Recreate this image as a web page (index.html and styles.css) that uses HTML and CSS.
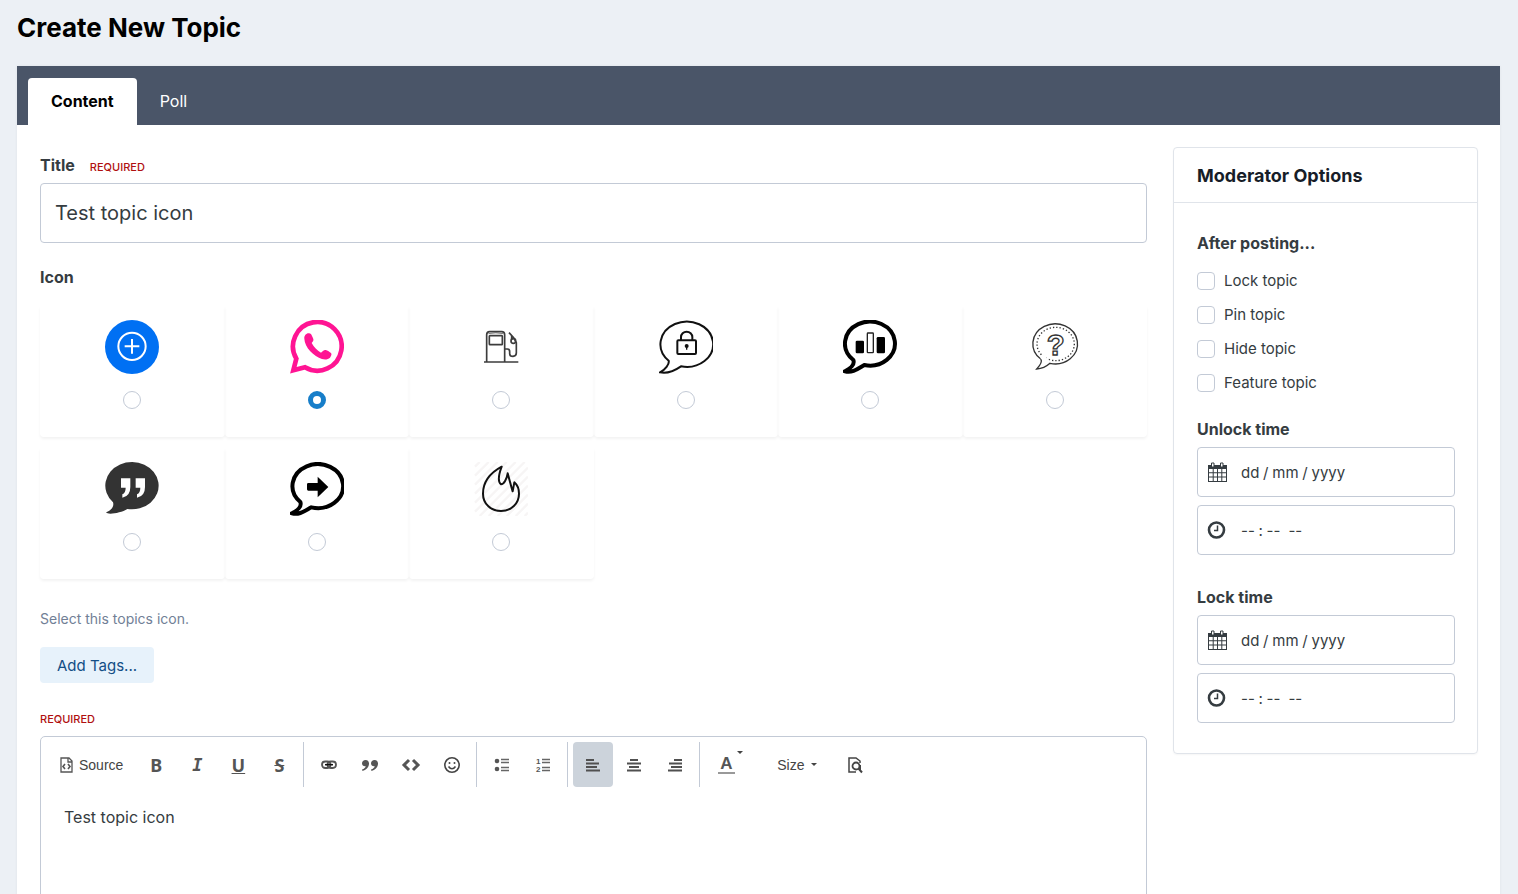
FILE: index.html
```html
<!DOCTYPE html>
<html lang="en">
<head>
    <meta charset="UTF-8">
    <meta name="viewport" content="width=device-width, initial-scale=1.0">
    <title>Create New Topic</title>
    <link rel="stylesheet" href="styles.css">
</head>
<body>
    <div class="page">
        <h1>Create New Topic</h1>

        <form class="panel">
            <nav class="tabs">
                <a href="#content" class="tab active">Content</a>
                <a href="#poll" class="tab">Poll</a>
            </nav>

            <div class="columns" id="content">
                <main>
                    <div class="label-row">
                        <label class="label" for="title">Title</label>
                        <span class="required">REQUIRED</span>
                    </div>
                    <input type="text" id="title" class="title-input" value="Test topic icon">

                    <!-- Topic icons -->
                    <fieldset class="icons">
                        <legend class="label">Icon</legend>
                        <div class="icon-grid">
                            <label class="icon-card">
                                <svg viewBox="0 0 162 162" aria-hidden="true">
                                    <circle cx="81" cy="81" r="81" fill="#0070f3"/>
                                    <g fill="none" stroke="#fff" stroke-width="6">
                                        <circle cx="81" cy="79" r="41"/>
                                        <path d="M81 57v44M59 79h44"/>
                                    </g>
                                </svg>
                                <input type="radio" name="icon" value="plus" aria-label="Plus">
                            </label>
                            <label class="icon-card">
                                <svg viewBox="0 0 162 162" aria-hidden="true">
                                    <path d="M19 116L10 151L45 142A73 73 0 1 0 19 116Z" fill="none" stroke="#ff1493" stroke-width="14"/>
                                    <path d="M43 56C42 47 49 39 57 40C62 40 64 43 66 48C68 53 73 59 69 64L65 69C72 82 81 91 93 98C98 94 101 89 107 90C113 91 119 96 123 99C126 102 124 108 120 113C114 119 104 119 96 117C72 109 44 83 43 56Z" fill="#ff1493"/>
                                </svg>
                                <input type="radio" name="icon" value="phone" aria-label="Phone" checked>
                            </label>
                            <label class="icon-card">
                                <svg viewBox="0 0 162 162" fill="none" stroke="#3c3c3c" stroke-width="5" aria-hidden="true">
                                    <path d="M30 126H133M38 124V44Q38 35 47 35H83Q92 35 92 44V124"/>
                                    <path d="M43 41Q65 36 88 41" stroke-width="2"/>
                                    <rect x="46" y="47" width="39" height="27" rx="2"/>
                                    <path d="M92 87H100Q107 87 107 95V101Q107 109 117 109Q127 108 127 99V68L119 53L105 38M113 48L113 58"/>
                                    <circle cx="118" cy="63" r="7"/>
                                </svg>
                                <input type="radio" name="icon" value="fuel" aria-label="Fuel">
                            </label>
                            <label class="icon-card">
                                <svg viewBox="0 0 162 162" fill="none" stroke="#111" stroke-width="6" aria-hidden="true">
                                    <path d="M29 122C32 132 18 150 3 157C25 162 50 150 66 139A79 68 0 1 0 29 122Z"/>
                                    <rect x="55" y="61" width="56" height="41" rx="3"/>
                                    <path d="M66 61V51A17 16 0 0 1 100 51V61"/>
                                    <circle cx="83" cy="78" r="3" fill="#111"/>
                                    <path d="M83 78V89" stroke-width="4"/>
                                </svg>
                                <input type="radio" name="icon" value="locked" aria-label="Locked">
                            </label>
                            <label class="icon-card">
                                <svg viewBox="0 0 162 162" aria-hidden="true">
                                    <path d="M31 120C36 133 22 146 6 154C28 160 45 146 64 135A75 66 0 1 0 31 120Z" fill="none" stroke="#000" stroke-width="12"/>
                                    <rect x="38" y="62" width="25" height="38" rx="4"/>
                                    <rect x="73" y="39" width="18" height="59" rx="2" fill="#fff" stroke="#222" stroke-width="4"/>
                                    <rect x="101" y="51" width="25" height="49" rx="4"/>
                                </svg>
                                <input type="radio" name="icon" value="poll" aria-label="Poll">
                            </label>
                            <label class="icon-card">
                                <svg viewBox="0 0 162 162" fill="none" stroke="#333" stroke-width="4" aria-hidden="true">
                                    <path d="M39 118C44 128 34 138 26 147C42 146 56 139 66 130A67 60 0 1 0 39 118Z"/>
                                    <ellipse cx="83" cy="72" rx="56" ry="50" stroke-width="4" stroke-dasharray="4 6"/>
                                    <path d="M41 109L61 127" stroke="#fff" stroke-width="13"/>
                                    <text class="help-mark" x="83" y="106" text-anchor="middle">?</text>
                                </svg>
                                <input type="radio" name="icon" value="question" aria-label="Question">
                            </label>
                            <label class="icon-card">
                                <svg viewBox="0 0 162 162" aria-hidden="true">
                                    <path d="M24 121C28 132 20 145 3 151C8 160 48 153 67 141A80 71 0 1 0 24 121Z" fill="#333"/>
                                    <path d="M48 49H76V75Q76 103 52 107V97Q62 93 62 77H48ZM92 49H120V75Q120 103 96 107V97Q106 93 106 77H92Z" fill="#fff"/>
                                </svg>
                                <input type="radio" name="icon" value="quote" aria-label="Quote">
                            </label>
                            <label class="icon-card">
                                <svg viewBox="0 0 162 162" aria-hidden="true">
                                    <path d="M31 120C36 133 22 146 6 154C28 160 45 146 64 136A76 66 0 1 0 31 120Z" fill="none" stroke="#000" stroke-width="12"/>
                                    <path d="M55 63H83V44L115 75L83 106V86H55Q51 86 51 82V67Q51 63 55 63Z"/>
                                </svg>
                                <input type="radio" name="icon" value="moved" aria-label="Moved">
                            </label>
                            <label class="icon-card">
                                <svg viewBox="0 0 162 162" fill="none" aria-hidden="true">
                                    <path d="M3 14L17 0M3 41L44 0M3 68L71 0M3 95L98 0M3 122L125 0M3 149L152 0M17 162L162 17M44 162L162 44M71 162L162 71M98 162L162 98M125 162L162 125M152 162L162 152" stroke="#f7f5f5" stroke-width="7"/>
                                    <path d="M83 14C48 33 27 62 27 95C27 127 52 147 81 147C112 147 135 124 135 95C135 80 129 68 121 61L116 88C109 66 106 51 101 34C98 52 90 67 81 67C72 60 74 38 83 14Z" stroke="#111" stroke-width="6" stroke-linejoin="round"/>
                                </svg>
                                <input type="radio" name="icon" value="hot" aria-label="Hot">
                            </label>
                        </div>
                    </fieldset>

                    <p class="hint">Select this topics icon.</p>
                    <button type="button" class="btn-tags">Add Tags...</button>

                    <!-- Editor -->
                    <div class="required editor-required">REQUIRED</div>
                    <div class="editor">
                        <div class="toolbar">
                            <button type="button" class="tool tool-source">
                                <svg width="13" height="16" viewBox="0 0 13 16" fill="none" stroke="#555" aria-hidden="true">
                                    <path d="M1 1H9L12 4V15H1ZM8 1V5H12" stroke-width="1.3"/>
                                    <path d="M5 7L3 9.500L5 12M8 7L10 9.500L8 12" stroke-width="1.600"/>
                                </svg>
                                Source
                            </button>
                            <button type="button" class="tool letter">B</button>
                            <button type="button" class="tool letter italic">I</button>
                            <button type="button" class="tool letter underline">U</button>
                            <button type="button" class="tool letter strike">S</button>
                            <span class="sep"></span>
                            <button type="button" class="tool" aria-label="Link">
                                <svg width="16" height="16" viewBox="0 0 16 16" fill="none" aria-hidden="true">
                                    <rect x="1" y="4.500" width="8.500" height="6.500" rx="3.200" stroke="#555" stroke-width="1.800"/>
                                    <rect x="6.500" y="4.500" width="8.500" height="6.500" rx="3.200" stroke="#555" stroke-width="1.800"/>
                                    <path d="M4 7.700H12" stroke="#111" stroke-width="1.500"/>
                                </svg>
                            </button>
                            <button type="button" class="tool" aria-label="Quote">
                                <svg width="18" height="16" viewBox="0 0 18 16" fill="#555" aria-hidden="true">
                                    <path d="M4.500 3C7 3 8.200 4.800 8 7C7.700 10.500 5 13 1.500 14L1 12.500C3.300 11.700 4.500 10.600 4.700 9.200C2.500 9.600 1 8 1 6.200C1 4.300 2.600 3 4.500 3ZM13.500 3C16 3 17.200 4.800 17 7C16.700 10.500 14 13 10.500 14L10 12.500C12.300 11.700 13.500 10.600 13.700 9.200C11.500 9.600 10 8 10 6.200C10 4.300 11.600 3 13.500 3Z"/>
                                </svg>
                            </button>
                            <button type="button" class="tool" aria-label="Code">
                                <svg width="20" height="16" viewBox="0 0 20 16" fill="none" stroke="#555" stroke-width="3" aria-hidden="true">
                                    <path d="M8 3L3 8L8 13M12 3L17 8L12 13"/>
                                </svg>
                            </button>
                            <button type="button" class="tool" aria-label="Emoji">
                                <svg width="18" height="18" viewBox="0 0 18 18" fill="none" stroke="#444" stroke-width="1.600" aria-hidden="true">
                                    <circle cx="9" cy="9" r="7.200"/>
                                    <path d="M5.500 10.500Q9 15 12.500 10.500"/>
                                    <circle cx="6.500" cy="7" r="1" fill="#444" stroke="none"/>
                                    <circle cx="11.500" cy="7" r="1" fill="#444" stroke="none"/>
                                </svg>
                            </button>
                            <span class="sep"></span>
                            <button type="button" class="tool" aria-label="Bulleted list">
                                <svg width="16" height="16" viewBox="0 0 16 16" aria-hidden="true">
                                    <circle cx="3" cy="4" r="2.300" fill="#555"/>
                                    <circle cx="3" cy="12" r="2.300" fill="#555"/>
                                    <path d="M7 2.500H15M7 5.500H15M7 10.500H15M7 13.500H15" stroke="#666" stroke-width="1.400"/>
                                </svg>
                            </button>
                            <button type="button" class="tool" aria-label="Numbered list">
                                <svg width="16" height="16" viewBox="0 0 16 16" aria-hidden="true">
                                    <text class="list-num" x="1" y="7">1</text>
                                    <text class="list-num" x="1" y="15">2</text>
                                    <path d="M7 2.500H15M7 5.500H15M7 10.500H15M7 13.500H15" stroke="#666" stroke-width="1.400"/>
                                </svg>
                            </button>
                            <span class="sep"></span>
                            <button type="button" class="tool pressed" aria-label="Align left">
                                <svg width="16" height="16" viewBox="0 0 16 16" aria-hidden="true">
                                    <path d="M1 3H9M1 6.500H14M1 10H12M1 13.500H15" stroke="#505050" stroke-width="2"/>
                                </svg>
                            </button>
                            <button type="button" class="tool" aria-label="Align center">
                                <svg width="16" height="16" viewBox="0 0 16 16" aria-hidden="true">
                                    <path d="M4 3H12M1 6.500H15M3 10H13M1 13.500H15" stroke="#505050" stroke-width="2"/>
                                </svg>
                            </button>
                            <button type="button" class="tool" aria-label="Align right">
                                <svg width="16" height="16" viewBox="0 0 16 16" aria-hidden="true">
                                    <path d="M7 3H15M2 6.500H15M4 10H15M1 13.500H15" stroke="#505050" stroke-width="2"/>
                                </svg>
                            </button>
                            <span class="sep"></span>
                            <button type="button" class="tool color-tool" aria-label="Text color">
                                <span class="color-letter">A</span>
                                <span class="caret"></span>
                            </button>
                            <button type="button" class="tool size-tool">Size <span class="caret"></span></button>
                            <button type="button" class="tool" aria-label="Preview">
                                <svg width="16" height="18" viewBox="0 0 16 18" fill="none" stroke="#444" aria-hidden="true">
                                    <path d="M13 7V5L9 2H2V16H9" stroke-width="1.500"/>
                                    <circle cx="9" cy="10" r="3.500" stroke-width="1.800"/>
                                    <path d="M11.500 12.500L15 16.500M13 9V14" stroke-width="2"/>
                                </svg>
                            </button>
                        </div>
                        <textarea aria-label="Topic text">Test topic icon</textarea>
                    </div>
                </main>

                <aside class="moderator">
                    <h2>Moderator Options</h2>
                    <div class="moderator-body">
                        <h3 class="label">After posting...</h3>
                        <div class="options">
                            <label><input type="checkbox" name="lock"> Lock topic</label>
                            <label><input type="checkbox" name="pin"> Pin topic</label>
                            <label><input type="checkbox" name="hide"> Hide topic</label>
                            <label><input type="checkbox" name="feature"> Feature topic</label>
                        </div>

                        <div class="time-group">
                            <label class="label" for="unlock-date">Unlock time</label>
                            <div class="time-field">
                                <svg width="20" height="20" viewBox="0 0 20 20" aria-hidden="true">
                                    <path d="M1 3H20V20H1Z" fill="#353c41"/>
                                    <path d="M2 7H5.700V10.300H2ZM6.700 7H10V10.300H6.700ZM11 7H14.300V10.300H11ZM15.300 7H19V10.300H15.300ZM2 11.300H5.700V14.600H2ZM6.700 11.300H10V14.600H6.700ZM11 11.300H14.300V14.600H11ZM15.300 11.300H19V14.600H15.300ZM2 15.600H5.700V19H2ZM6.700 15.600H10V19H6.700ZM11 15.600H14.300V19H11ZM15.300 15.600H19V19H15.300Z" fill="#fff"/>
                                    <path d="M4.500 1H7V5H4.500ZM13.500 1H16V5H13.500Z" fill="#fff" stroke="#353c41"/>
                                </svg>
                                <input type="text" id="unlock-date" placeholder="dd&#8197;/&#8197;mm&#8197;/&#8197;yyyy">
                            </div>
                            <div class="time-field">
                                <svg width="20" height="20" viewBox="0 0 20 20" fill="none" stroke="#353c41" aria-hidden="true">
                                    <circle cx="9.500" cy="10" r="7.500" stroke-width="2.600"/>
                                    <path d="M10.500 5.500V10.500H7" stroke-width="1.500"/>
                                </svg>
                                <input type="text" aria-label="Unlock hour" placeholder="--&#8197;:&#8197;-- &#8197;--">
                            </div>
                        </div>

                        <div class="time-group">
                            <label class="label" for="lock-date">Lock time</label>
                            <div class="time-field">
                                <svg width="20" height="20" viewBox="0 0 20 20" aria-hidden="true">
                                    <path d="M1 3H20V20H1Z" fill="#353c41"/>
                                    <path d="M2 7H5.700V10.300H2ZM6.700 7H10V10.300H6.700ZM11 7H14.300V10.300H11ZM15.300 7H19V10.300H15.300ZM2 11.300H5.700V14.600H2ZM6.700 11.300H10V14.600H6.700ZM11 11.300H14.300V14.600H11ZM15.300 11.300H19V14.600H15.300ZM2 15.600H5.700V19H2ZM6.700 15.600H10V19H6.700ZM11 15.600H14.300V19H11ZM15.300 15.600H19V19H15.300Z" fill="#fff"/>
                                    <path d="M4.500 1H7V5H4.500ZM13.500 1H16V5H13.500Z" fill="#fff" stroke="#353c41"/>
                                </svg>
                                <input type="text" id="lock-date" placeholder="dd&#8197;/&#8197;mm&#8197;/&#8197;yyyy">
                            </div>
                            <div class="time-field">
                                <svg width="20" height="20" viewBox="0 0 20 20" fill="none" stroke="#353c41" aria-hidden="true">
                                    <circle cx="9.500" cy="10" r="7.500" stroke-width="2.600"/>
                                    <path d="M10.500 5.500V10.500H7" stroke-width="1.500"/>
                                </svg>
                                <input type="text" aria-label="Lock hour" placeholder="--&#8197;:&#8197;-- &#8197;--">
                            </div>
                        </div>
                    </div>
                </aside>
            </div>
        </form>
    </div>
</body>
</html>
```

FILE: styles.css
```css
* {
    box-sizing: border-box;
}

body {
    margin: 0;
    font-family: Inter, sans-serif;
    font-size: 15px;
    line-height: 20px;
    color: #353c41;
    background: #ecf0f5;
}

button,
input,
textarea {
    font-family: inherit;
    color: inherit;
}

.page {
    height: 100vh;
    padding: 0 18px 0 17px;
    overflow-y: auto;
    scrollbar-width: none;
}

h1 {
    margin: 0;
    padding: 10px 0 20px;
    font-size: 26px;
    line-height: 36px;
    font-weight: 700;
    color: #000;
}

.panel {
    background: #fff;
    box-shadow: 0 0 3px rgba(0, 0, 0, 0.06);
}

/* Tabs */
.tabs {
    display: flex;
    padding: 12px 11px 0;
    background: #4a5568;
}

.tab {
    padding: 0 23px;
    font-size: 16px;
    line-height: 47px;
    color: #fff;
    text-decoration: none;
}

.tab.active {
    font-weight: 700;
    color: #000;
    background: #fff;
    border-radius: 4px 4px 0 0;
}

.columns {
    display: flex;
    align-items: flex-start;
    gap: 26px;
    padding: 22px 22px 22px 23px;
}

main {
    flex: 1;
    min-width: 0;
    padding-top: 8px;
}

.label {
    font-size: 16px;
    line-height: 20px;
    font-weight: 700;
}

.label-row {
    display: flex;
    align-items: baseline;
    gap: 15px;
    margin-bottom: 6px;
}

.required {
    font-size: 11px;
    line-height: 20px;
    font-weight: 500;
    color: #b01010;
}

.title-input {
    display: block;
    width: 100%;
    height: 60px;
    padding: 0 14px;
    font-size: 20px;
    background: #fff;
    border: 1px solid #c3cad6;
    border-radius: 4px;
}

/* Topic icons */
.icons {
    margin: 24px 0 0;
    padding: 0;
    border: 0;
}

.icons legend {
    padding: 0;
}

.icon-grid {
    display: grid;
    grid-template-columns: repeat(6, 1fr);
    row-gap: 10px;
    margin-top: 18px;
}

.icon-card {
    display: flex;
    flex-direction: column;
    align-items: center;
    gap: 17px;
    height: 132px;
    padding-top: 15px;
    border-radius: 4px;
    box-shadow: 0 2px 3px rgba(0, 0, 0, 0.05);
}

.icon-card svg {
    width: 54px;
    height: 54px;
}

.help-mark {
    font-family: "Liberation Sans", sans-serif;
    font-size: 88px;
    font-weight: bold;
}

input[type="radio"],
input[type="checkbox"] {
    appearance: none;
    width: 18px;
    height: 18px;
    margin: 0;
    background: #fff;
    border: 1px solid #c3cad6;
    border-radius: 4px;
}

input[type="radio"] {
    border-radius: 50%;
}

input[type="radio"]:checked {
    border: 5px solid #177ec9;
}

.hint {
    margin: 30px 0 18px;
    font-size: 14px;
    color: #718096;
}

.btn-tags {
    display: block;
    height: 36px;
    padding: 0 17px;
    font-size: 15px;
    color: #134e86;
    background: #e7f2fb;
    border: 0;
    border-radius: 4px;
}

/* Editor */
.editor-required {
    margin: 26px 0 7px;
}

.editor {
    border: 1px solid #c3cad6;
    border-radius: 5px;
}

.toolbar {
    display: flex;
    gap: 1px;
    padding: 5px 7px;
}

.tool {
    display: flex;
    align-items: center;
    justify-content: center;
    width: 40px;
    height: 45px;
    padding: 0;
    font-family: "Liberation Sans", sans-serif;
    font-size: 14px;
    color: #444;
    background: none;
    border: 0;
    border-radius: 4px;
}

.tool.pressed {
    background: #ccd3db;
}

.tool-source {
    gap: 6px;
    width: auto;
    padding: 0 12px;
}

.letter {
    font-family: "Noto Sans", sans-serif;
    font-size: 18px;
    font-weight: 700;
    color: #555;
}

.italic {
    font-family: "DejaVu Sans Mono", monospace;
    font-size: 17px;
    font-style: italic;
}

.underline {
    text-decoration: underline;
}

.strike {
    text-decoration: line-through;
}

.sep {
    width: 1px;
    margin: 0 4px 0 3px;
    background: #c3cad6;
}

.list-num {
    font-family: "Liberation Sans", sans-serif;
    font-size: 8px;
    font-weight: bold;
    fill: #555;
}

.caret {
    border: 3px solid transparent;
    border-top-color: #444;
    border-bottom: 0;
}

.color-tool {
    position: relative;
    width: 42px;
}

.color-tool .caret {
    position: absolute;
    top: 9px;
    right: 4px;
}

.color-letter {
    width: 17px;
    font-size: 17px;
    line-height: 16px;
    font-weight: 700;
    color: #555;
    border-bottom: 2px solid #999;
}

.size-tool {
    gap: 7px;
    width: 86px;
    padding-left: 12px;
}

.editor textarea {
    display: block;
    width: 100%;
    height: 240px;
    padding: 15px 23px;
    font-size: 16px;
    line-height: 20px;
    background: none;
    border: 0;
    resize: none;
}

/* Moderator options */
.moderator {
    width: 305px;
    border: 1px solid #e0e4ea;
    border-radius: 4px;
    box-shadow: 0 1px 2px rgba(0, 0, 0, 0.04);
}

.moderator h2 {
    margin: 0;
    padding: 18px 23px 16px;
    font-size: 18px;
    line-height: 20px;
    font-weight: 700;
    color: #171d28;
    border-bottom: 1px solid #e0e4ea;
}

.moderator-body {
    padding: 30px 22px 30px 23px;
}

.moderator h3 {
    margin: 0 0 18px;
}

.options label {
    display: flex;
    align-items: center;
    gap: 9px;
    margin-bottom: 14px;
}

.time-group {
    display: flex;
    flex-direction: column;
    gap: 8px;
    margin-top: 32px;
}

.options + .time-group {
    margin-top: 26px;
}

.time-field {
    display: flex;
    align-items: center;
    gap: 14px;
    height: 50px;
    padding: 0 9px;
    border: 1px solid #c3cad6;
    border-radius: 4px;
}

.time-field input {
    flex: 1;
    min-width: 0;
    padding: 0;
    font-size: 15px;
    background: none;
    border: 0;
}

.time-field input::placeholder {
    color: #353c41;
}
```
